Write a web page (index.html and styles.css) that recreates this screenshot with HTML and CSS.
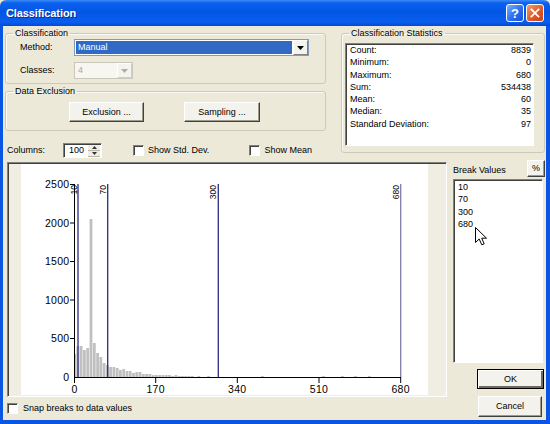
FILE: index.html
```html
<!DOCTYPE html>
<html lang="en">
<head>
    <meta charset="UTF-8">
    <title>Classification</title>
    <link rel="stylesheet" href="styles.css">
</head>
<body>
<div class="dialog">
    <div class="titlebar">
        <span class="title">Classification</span>
        <div class="title-buttons">
            <span class="tb-btn tb-help">?</span>
            <span class="tb-btn tb-close">
                <svg width="18" height="18" viewBox="0 0 18 18"><path d="M5 5 L13 13 M13 5 L5 13" stroke="#fff" stroke-width="2" stroke-linecap="square"/></svg>
            </span>
        </div>
    </div>

    <div class="content">
        <div class="top">
            <div class="left-col">
                <fieldset class="group group-class">
                    <legend>Classification</legend>
                    <div class="form-row">
                        <span class="form-label">Method:</span>
                        <div class="combo combo-method">
                            <span class="combo-value">Manual</span>
                            <span class="combo-btn"><svg width="7" height="4" viewBox="0 0 7 4"><path d="M0 0 H7 L3.5 4 Z" fill="#000"/></svg></span>
                        </div>
                    </div>
                    <div class="form-row">
                        <span class="form-label">Classes:</span>
                        <div class="combo combo-classes">
                            <span class="combo-value">4</span>
                            <span class="combo-btn"><svg width="7" height="4" viewBox="0 0 7 4"><path d="M0 0 H7 L3.5 4 Z" fill="#b0ae9f"/></svg></span>
                        </div>
                    </div>
                </fieldset>

                <fieldset class="group group-excl">
                    <legend>Data Exclusion</legend>
                    <div class="btn-row">
                        <button class="btn btn-excl">Exclusion ...</button>
                        <button class="btn btn-samp">Sampling ...</button>
                    </div>
                </fieldset>

                <div class="options">
                    <span class="opt-label">Columns:</span>
                    <div class="spin">
                        <span class="spin-value">100</span>
                        <span class="spin-btns">
                            <span class="spin-up"><svg width="5" height="3" viewBox="0 0 5 3"><path d="M0 3 H5 L2.5 0 Z" fill="#333"/></svg></span>
                            <span class="spin-down"><svg width="5" height="3" viewBox="0 0 5 3"><path d="M0 0 H5 L2.5 3 Z" fill="#333"/></svg></span>
                        </span>
                    </div>
                    <label class="check check-std"><span class="box"></span>Show Std. Dev.</label>
                    <label class="check check-mean"><span class="box"></span>Show Mean</label>
                </div>
            </div>

            <fieldset class="group group-stats">
                <legend>Classification Statistics</legend>
                <div class="stats-box">
                    <div class="stat"><span>Count:</span><span>8839</span></div>
                    <div class="stat"><span>Minimum:</span><span>0</span></div>
                    <div class="stat"><span>Maximum:</span><span>680</span></div>
                    <div class="stat"><span>Sum:</span><span>534438</span></div>
                    <div class="stat"><span>Mean:</span><span>60</span></div>
                    <div class="stat"><span>Median:</span><span>35</span></div>
                    <div class="stat"><span>Standard Deviation:</span><span>97</span></div>
                </div>
            </fieldset>
        </div>

        <div class="bottom">
            <div class="chart-col">
                <div class="chart-frame">
                    <svg class="chart" width="407" height="231" viewBox="0 0 407 231">
                        <!-- histogram columns -->
                        <g fill="#c0c0c0">
                            <rect x="53" y="190" width="2.2" height="23"/>
                            <rect x="55.4" y="182" width="2.8" height="31"/>
                            <rect x="58.7" y="182" width="2.8" height="31"/>
                            <rect x="62" y="186" width="2.8" height="27"/>
                            <rect x="65.3" y="184" width="2.8" height="29"/>
                            <rect x="68.6" y="55" width="2.8" height="158"/>
                            <rect x="71.9" y="179" width="2.8" height="34"/>
                            <rect x="75.2" y="189" width="2.8" height="24"/>
                            <rect x="78.4" y="193" width="2.8" height="20"/>
                            <rect x="81.7" y="199" width="2.8" height="14"/>
                            <rect x="85" y="201" width="2.8" height="12"/>
                            <rect x="88.2" y="203" width="2.8" height="10"/>
                            <rect x="91.5" y="203" width="2.8" height="10"/>
                            <rect x="94.8" y="204" width="2.8" height="9"/>
                            <rect x="98" y="206" width="2.8" height="7"/>
                            <rect x="101.3" y="205" width="2.8" height="8"/>
                            <rect x="104.6" y="207" width="2.8" height="6"/>
                            <rect x="107.8" y="207" width="2.8" height="6"/>
                            <rect x="111.1" y="209" width="2.8" height="4"/>
                            <rect x="114.4" y="208" width="2.8" height="5"/>
                            <rect x="117.6" y="208" width="2.8" height="5"/>
                            <rect x="120.9" y="210" width="2.8" height="3"/>
                            <rect x="124.2" y="210" width="2.8" height="3"/>
                            <rect x="127.4" y="210" width="2.8" height="3"/>
                            <rect x="130.7" y="211" width="2.8" height="2"/>
                            <rect x="134" y="211" width="2.8" height="2"/>
                            <rect x="137.3" y="211" width="2.8" height="2"/>
                            <rect x="140.5" y="211" width="2.8" height="2"/>
                            <rect x="143.8" y="211" width="2.8" height="2"/>
                            <rect x="147.1" y="211" width="2.8" height="2"/>
                            <rect x="150.3" y="212" width="2.8" height="1"/>
                            <rect x="153.6" y="211" width="2.8" height="2"/>
                            <rect x="156.9" y="212" width="2.8" height="1"/>
                            <rect x="160.1" y="212" width="2.8" height="1"/>
                            <rect x="163.4" y="212" width="2.8" height="1"/>
                            <rect x="166.7" y="212" width="2.8" height="1"/>
                            <rect x="169.9" y="212" width="2.8" height="1"/>
                            <rect x="176.4" y="212" width="2.8" height="1"/>
                            <rect x="186.2" y="212" width="2.8" height="1"/>
                            <rect x="240" y="212" width="2.8" height="1"/>
                            <rect x="301" y="212" width="2.8" height="1"/>
                            <rect x="320" y="212" width="2.8" height="1"/>
                            <rect x="333" y="212" width="2.8" height="1"/>
                            <rect x="347" y="212" width="2.8" height="1"/>
                        </g>

                        <!-- break lines -->
                        <g stroke-width="1.3">
                            <line x1="57" y1="20" x2="57" y2="213" stroke="#2d2d80"/>
                            <line x1="86.7" y1="20" x2="86.7" y2="213" stroke="#2d2d80"/>
                            <line x1="197.3" y1="20" x2="197.3" y2="213" stroke="#2d2d80"/>
                            <line x1="379.7" y1="20" x2="379.7" y2="213" stroke="#7c7ca8"/>
                        </g>
                        <g class="break-label">
                            <text transform="translate(55.5,21) rotate(-90)" text-anchor="end">10</text>
                            <text transform="translate(84.5,21) rotate(-90)" text-anchor="end">70</text>
                            <text transform="translate(195,21) rotate(-90)" text-anchor="end">300</text>
                            <text transform="translate(377.5,21) rotate(-90)" text-anchor="end">680</text>
                        </g>

                        <!-- axes -->
                        <g stroke="#000" stroke-width="1">
                            <line x1="53.5" y1="20" x2="53.5" y2="213.5"/>
                            <line x1="53" y1="213.5" x2="380" y2="213.5"/>
                            <line x1="49" y1="20.5" x2="53" y2="20.5"/>
                            <line x1="49" y1="59" x2="53" y2="59"/>
                            <line x1="49" y1="97.5" x2="53" y2="97.5"/>
                            <line x1="49" y1="136" x2="53" y2="136"/>
                            <line x1="49" y1="174.5" x2="53" y2="174.5"/>
                            <line x1="53.5" y1="213" x2="53.5" y2="219"/>
                            <line x1="134.7" y1="213" x2="134.7" y2="219"/>
                            <line x1="216.3" y1="213" x2="216.3" y2="219"/>
                            <line x1="298" y1="213" x2="298" y2="219"/>
                            <line x1="379.7" y1="213" x2="379.7" y2="219"/>
                        </g>
                        <g class="axis-label" text-anchor="end">
                            <text x="48.5" y="24">2500</text>
                            <text x="48.5" y="62.5">2000</text>
                            <text x="48.5" y="101">1500</text>
                            <text x="48.5" y="139.5">1000</text>
                            <text x="48.5" y="178">500</text>
                            <text x="48.5" y="216.5">0</text>
                        </g>
                        <g class="axis-label" text-anchor="middle">
                            <text x="53.5" y="229">0</text>
                            <text x="134.7" y="229">170</text>
                            <text x="216.3" y="229">340</text>
                            <text x="298" y="229">510</text>
                            <text x="379.7" y="229">680</text>
                        </g>
                    </svg>
                </div>
                <label class="check check-snap"><span class="box"></span>Snap breaks to data values</label>
            </div>

            <div class="side">
                <div class="break-head">
                    <span class="break-title">Break Values</span>
                    <button class="btn btn-pct">%</button>
                </div>
                <div class="break-list">
                    <div>10</div>
                    <div>70</div>
                    <div>300</div>
                    <div>680</div>
                </div>
                <button class="btn btn-ok">OK</button>
                <button class="btn btn-cancel">Cancel</button>
            </div>
        </div>
    </div>

    <svg class="cursor" width="13" height="19" viewBox="0 0 13 19">
        <path d="M0.5 0.5 V15.5 L4.2 12 L6.8 17.8 L9.2 16.8 L6.7 11.2 H11.5 Z" fill="#fff" stroke="#000" stroke-width="1" stroke-linejoin="miter"/>
    </svg>
</div>
</body>
</html>
```

FILE: styles.css
```css
* { box-sizing: border-box; }
body {
    margin: 0;
    font-family: "Liberation Sans", Arial, sans-serif;
    font-size: 9px;
    line-height: 11px;
    color: #000;
    background: #ece9d8;
}
.dialog {
    position: relative;
    width: 550px;
    height: 424px;
    display: flex;
    flex-direction: column;
    overflow: hidden;
}

/* title bar */
.titlebar {
    height: 26px;
    flex: none;
    display: flex;
    align-items: center;
    justify-content: space-between;
    padding: 0 6px 0 6px;
    background: linear-gradient(#3b8cf8 0, #0b61ee 3px, #0256e6 45%, #0a5eec 85%, #0349d6 100%);
    border-radius: 6px 6px 0 0;
}
.title {
    color: #fff;
    font-weight: bold;
    font-size: 11px;
    letter-spacing: -0.1px;
    text-shadow: 1px 1px #0b2a8c;
}
.title-buttons { display: flex; gap: 2px; }
.tb-btn {
    width: 18px;
    height: 18px;
    border: 1px solid #fff;
    border-radius: 3px;
    display: flex;
    align-items: center;
    justify-content: center;
}
.tb-help {
    background: linear-gradient(135deg, #7ab1ff, #2a6df0 55%, #1a52d6);
    color: #fff;
    font-weight: bold;
    font-size: 13px;
}
.tb-close {
    background: linear-gradient(135deg, #f29a76, #e25a26 55%, #c8401a);
}

/* client area */
.content {
    flex: 1;
    border: solid #0a55e4;
    border-width: 0 4px 4px 3px;
    padding: 0 1px 0 2px;
}
.top {
    display: flex;
    justify-content: space-between;
    padding-top: 2px;
}
.left-col { width: 321px; }

.group {
    margin: 0;
    padding: 0;
    min-width: 0;
    border: 1px solid #cdcab9;
    border-radius: 3px;
    box-shadow: inset 1px 1px #fbfaf5;
}
.group legend {
    margin-left: 7px;
    padding: 0 2px;
    line-height: 11px;
}
.group-class { height: 56px; }
.form-row { display: flex; align-items: center; height: 17px; padding-left: 14px; }
.form-row + .form-row { margin-top: 6px; }
.form-label { width: 54px; }

.combo {
    height: 17px;
    display: flex;
    border: 1px solid #7f9db9;
    background: #fff;
}
.combo-method { width: 235px; }
.combo-method .combo-value {
    flex: 1;
    margin: 1px;
    padding-left: 2px;
    background: #316ac5;
    color: #fff;
    line-height: 13px;
}
.combo-classes { width: 59px; border-color: #c9c7ba; background: #f7f6f1; }
.combo-classes .combo-value { flex: 1; padding-left: 3px; color: #aca899; line-height: 15px; }
.combo-btn {
    width: 15px;
    display: flex;
    align-items: center;
    justify-content: center;
    background: #f4f3ee;
    border: 1px solid;
    border-color: #fff #808080 #808080 #fff;
}
.combo-classes .combo-btn { border-color: #fff #d0cebf #d0cebf #fff; }

.group-excl { margin-top: 2px; height: 45px; }
.btn-row { display: flex; gap: 40px; padding-left: 63px; margin-top: 5px; }

.btn {
    font: inherit;
    color: #000;
    padding: 0;
    background: #f3f2ec;
    border: 1px solid;
    border-color: #fff #404040 #404040 #fff;
    box-shadow: inset -1px -1px #9d9b8c;
}
.btn-excl { width: 75px; height: 20px; }
.btn-samp { width: 76px; height: 20px; }

.options {
    display: flex;
    align-items: center;
    margin-top: 12px;
    height: 15px;
    padding-left: 2px;
}
.opt-label { width: 56px; }
.spin {
    width: 39px;
    height: 15px;
    display: flex;
    background: #fff;
    border: 1px solid;
    border-color: #808080 #fff #fff #808080;
    box-shadow: inset 1px 1px #404040;
}
.spin-value { flex: 1; padding-left: 5px; line-height: 13px; }
.spin-btns { width: 13px; display: flex; flex-direction: column; padding: 1px 1px 0 0; }
.spin-btns span {
    flex: 1;
    display: flex;
    align-items: center;
    justify-content: center;
    background: #efede4;
    border-bottom: 1px solid #b8b6a8;
}
.check { display: flex; align-items: center; gap: 4px; }
.check .box {
    width: 11px;
    height: 11px;
    background: #fff;
    border: 1px solid;
    border-color: #808080 #fff #fff #808080;
    box-shadow: inset 1px 1px #404040;
}
.check-std { margin-left: 31px; }
.check-mean { margin-left: 40px; }

.group-stats {
    width: 204px;
    height: 125px;
    padding: 0 10px 0 3px;
}
.group-stats legend { margin-left: 4px; }
.stats-box {
    margin-top: 4px;
    height: 103px;
    padding: 0 2px 0 4px;
    background: #fff;
    border: 1px solid;
    border-color: #808080 #fff #fff #808080;
    box-shadow: inset 1px 1px #404040;
}
.stat {
    display: flex;
    justify-content: space-between;
    line-height: 12.3px;
}

/* lower part */
.bottom { display: flex; margin-top: 2px; }
.chart-col { width: 440px; margin-left: 2px; }
.chart-frame {
    margin-top: 2px;
    height: 235px;
    padding: 0 16px 0 13px;
    background: #f0eee2;
    border: 1px solid;
    border-color: #808080 #fff #fff #808080;
    box-shadow: inset 1px 1px #404040;
}
.chart-frame .chart { display: block; background: #fff; margin-top: 1px; }
.axis-label { font-size: 10.5px; letter-spacing: 0.3px; fill: #000; }
.break-label { font-size: 8.5px; fill: #000; }
.check-snap { margin-top: 6px; gap: 5px; }

.side { width: 93px; margin-left: 5px; }
.break-head {
    height: 17px;
    display: flex;
    justify-content: space-between;
    align-items: center;
}
.break-title { padding: 3px 0 0 1px; }
.btn-pct { width: 18px; height: 17px; }
.break-list {
    margin: 2px 2px 0 1px;
    height: 184px;
    padding: 1px 0 0 4px;
    background: #fff;
    border: 1px solid;
    border-color: #808080 #fff #fff #808080;
    box-shadow: inset 1px 1px #404040;
}
.break-list div { line-height: 12.3px; }
.btn-ok {
    display: block;
    margin: 6px 0 0 25px;
    width: 67px;
    height: 20px;
    border-color: #000;
    box-shadow: inset 1px 1px #fff, inset -2px -2px #6d6b60;
}
.btn-cancel {
    display: block;
    margin: 7px 0 0 26px;
    width: 64px;
    height: 21px;
}

.cursor {
    position: absolute;
    left: 475px;
    top: 227px;
}
```
